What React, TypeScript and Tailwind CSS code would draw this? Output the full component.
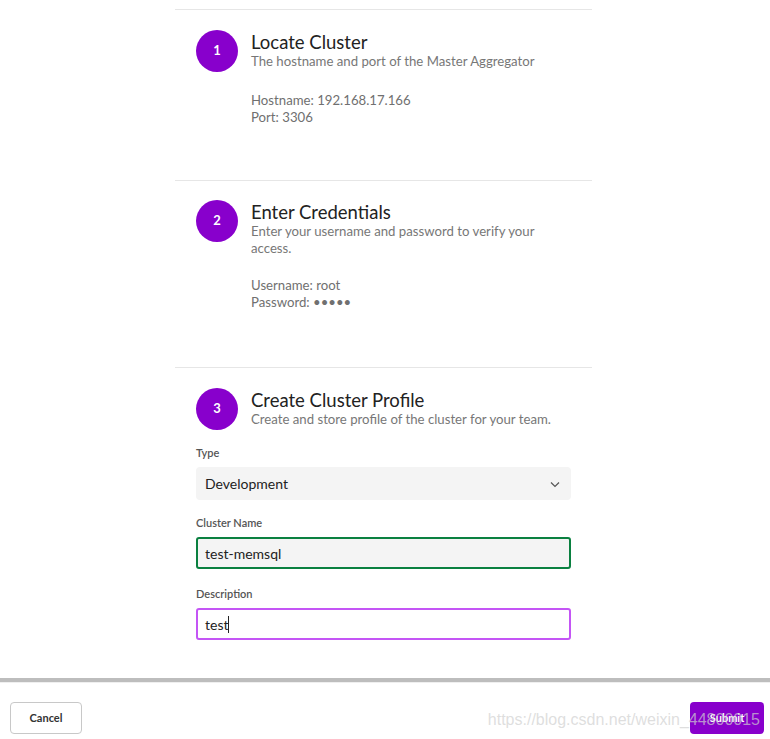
import React from "react";

function StepHeader({ n, title, sub }: { n: number; title: string; sub: string }) {
  return (
    <div className="flex items-start">
      <div className="w-[42px] h-[42px] shrink-0 rounded-full bg-[#8800cc] text-white flex items-center justify-center text-[13px] font-bold">
        {n}
      </div>
      <div className="ml-[13px] pt-[1px]">
        <div className="text-[18.5px] leading-[22px] text-[#222]">{title}</div>
        <div className="text-[13.2px] leading-[17px] text-[#777]">{sub}</div>
      </div>
    </div>
  );
}

function Label({ children }: { children: React.ReactNode }) {
  return (
    <div className="text-[11px] leading-[14px] font-semibold text-[#555] mb-[7px]">{children}</div>
  );
}

export default function App() {
  return (
    <div className="h-[739px] flex flex-col bg-white overflow-hidden" style={{ fontFamily: "Lato, 'Open Sans', sans-serif" }}>
      <div className="flex-1 pt-[9px]">
        <div className="ml-[175px] w-[417px]">
          <section className="border-t border-[#e6e6e6] pt-[20px] px-[21px] pb-[54px]">
            <StepHeader n={1} title="Locate Cluster" sub="The hostname and port of the Master Aggregator" />
            <div className="ml-[55px] mt-[20px] text-[13.2px] leading-[17px] text-[#707070]">
              <div>Hostname: 192.168.17.166</div>
              <div>Port: 3306</div>
            </div>
          </section>

          <section className="border-t border-[#e6e6e6] pt-[19px] px-[21px] pb-[56px]">
            <StepHeader n={2} title="Enter Credentials" sub="Enter your username and password to verify your access." />
            <div className="ml-[55px] mt-[20px] text-[13.2px] leading-[17px] text-[#707070]">
              <div>Username: root</div>
              <div>Password: •••••</div>
            </div>
          </section>

          <section className="border-t border-[#e6e6e6] pt-[20px] px-[21px]">
            <StepHeader n={3} title="Create Cluster Profile" sub="Create and store profile of the cluster for your team." />

            <div className="mt-[16px]">
              <Label>Type</Label>
              <div className="h-[33px] rounded-[4px] bg-[#f4f4f4] flex items-center justify-between pl-[9px] pr-[10px] text-[14px] text-[#222]">
                <span>Development</span>
                <svg width="12" height="12" viewBox="0 0 12 12" fill="none" stroke="#555" strokeWidth="1.2">
                  <path d="M2 4.5l4 4 4-4" />
                </svg>
              </div>
            </div>

            <div className="mt-[16px]">
              <Label>Cluster Name</Label>
              <div className="h-[32px] rounded-[3px] border-2 border-[#0a8040] bg-[#f4f4f4] flex items-center px-[7px] text-[14px] text-[#222]">
                test-memsql
              </div>
            </div>

            <div className="mt-[18px]">
              <Label>Description</Label>
              <div className="h-[32px] rounded-[3px] border-2 border-[#c455f5] bg-white flex items-center px-[7px] text-[14px] text-[#222]">
                test<span className="inline-block w-[1px] h-[17px] bg-[#222]" />
              </div>
            </div>
          </section>
        </div>
      </div>

      <footer className="relative h-[61px] border-t-4 border-[#bdbdbd]">
        <div className="h-[1px] bg-[#efefef]" />
        <div className="flex items-center justify-between px-[10px] pr-[6px] pt-[19px]">
          <button className="h-[32px] w-[72px] rounded-[4px] border border-[#c8c8c8] bg-white text-[11px] font-bold text-[#333]">
            Cancel
          </button>
          <button className="h-[32px] w-[74px] rounded-[4px] bg-[#8800cc] text-[11px] font-bold text-white">
            Submit
          </button>
        </div>
        <div className="absolute z-10 right-[10px] top-[26px] text-[16px] text-[#d0d0d0]/70 pointer-events-none" style={{ fontFamily: "'Liberation Sans', Arial, sans-serif" }}>
          https://blog.csdn.net/weixin_44800015
        </div>
      </footer>
    </div>
  );
}
